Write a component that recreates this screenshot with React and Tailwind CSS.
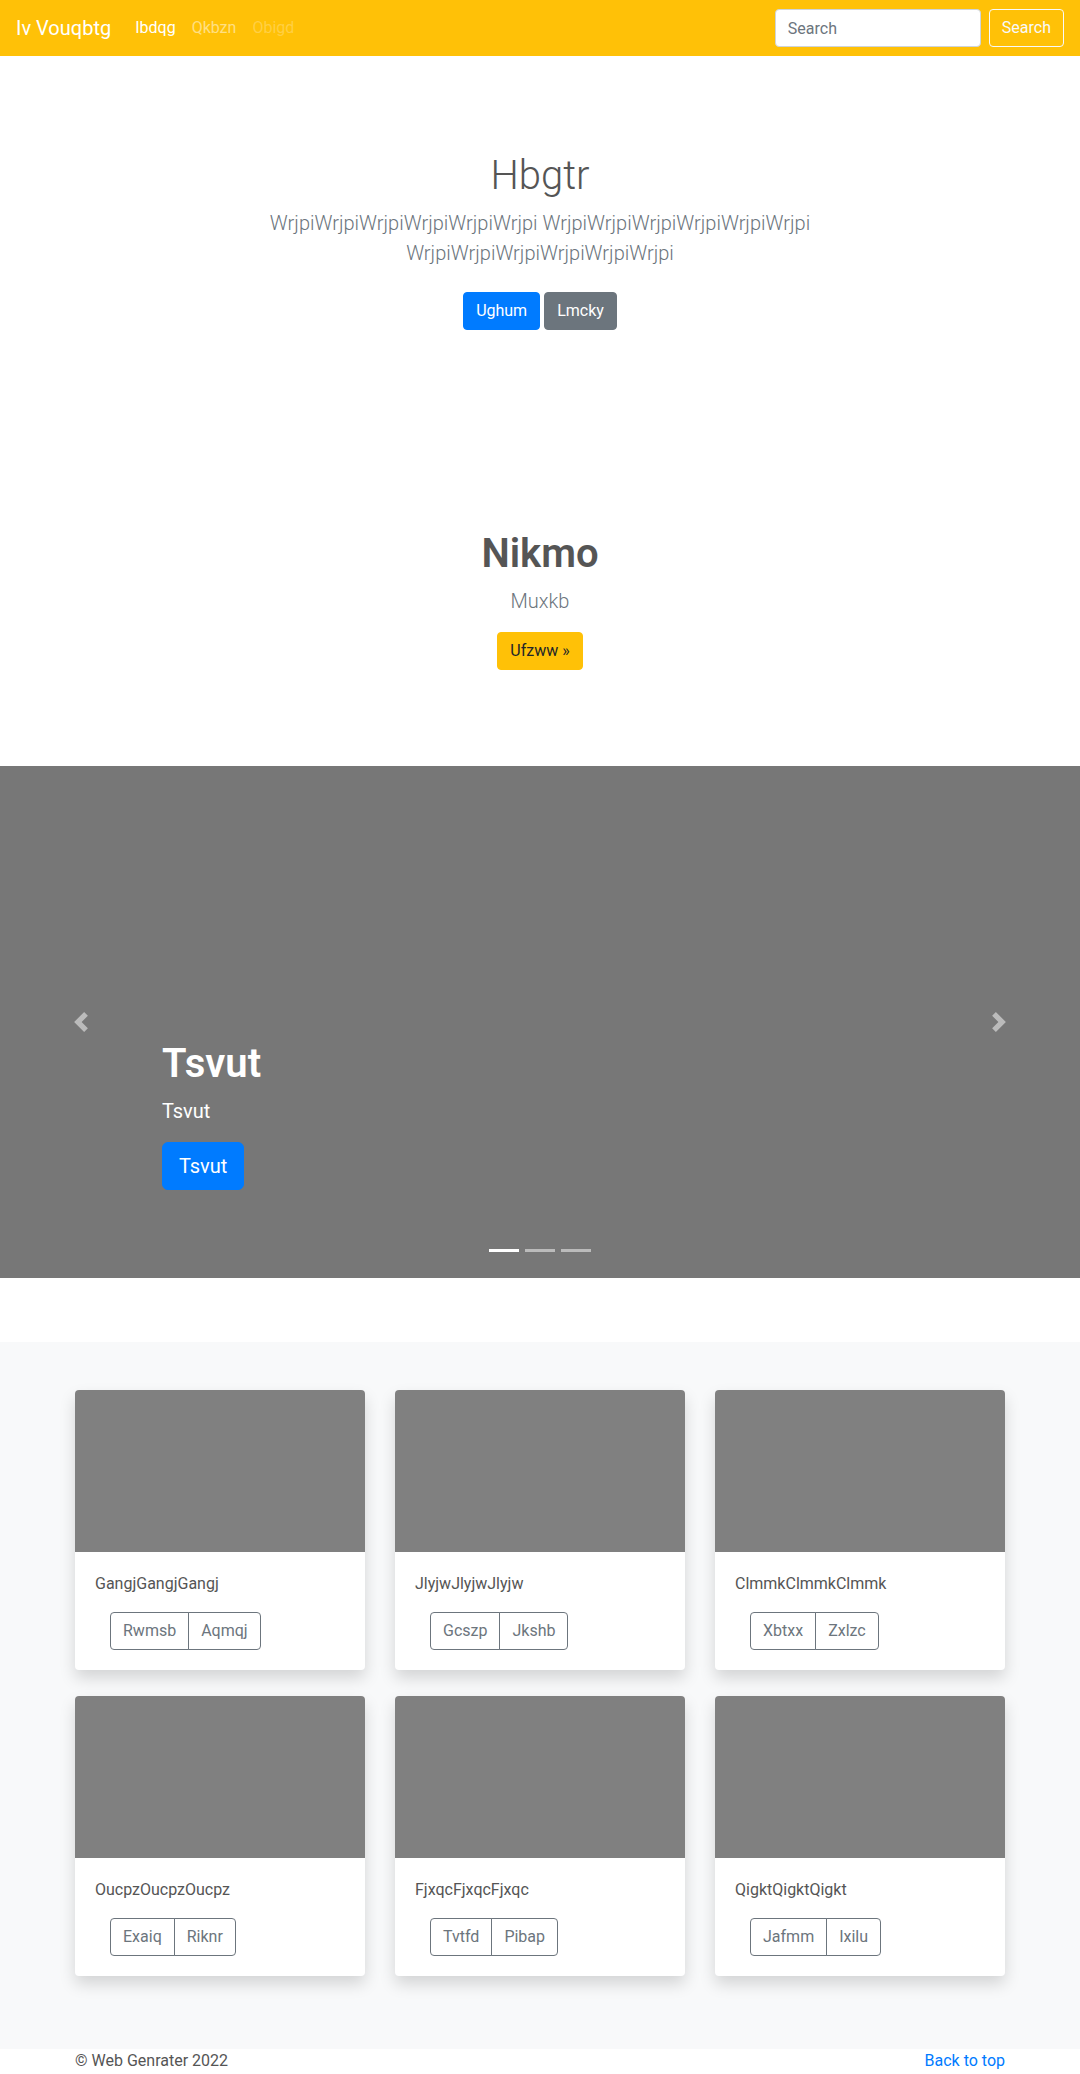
import React from "react";

const cards = [
    {title: "GangjGangjGangj", a: "Rwmsb", b: "Aqmqj"},
    {title: "JlyjwJlyjwJlyjw", a: "Gcszp", b: "Jkshb"},
    {title: "ClmmkClmmkClmmk", a: "Xbtxx", b: "Zxlzc"},
    {title: "OucpzOucpzOucpz", a: "Exaiq", b: "Riknr"},
    {title: "FjxqcFjxqcFjxqc", a: "Tvtfd", b: "Pibap"},
    {title: "QigktQigktQigkt", a: "Jafmm", b: "Ixilu"}
];

function Navbar() {
    return (
        <nav className="h-14 bg-[#ffc107] flex items-center px-4">
            <a className="text-white text-[20px] leading-[30px] mr-4" href="#">Iv Vouqbtg</a>
            <div className="flex text-[16px] leading-6">
                <a className="px-2 text-white" href="#">Ibdqg</a>
                <a className="px-2 text-white/50" href="#">Qkbzn</a>
                <a className="px-2 text-white/25" href="#">Obigd</a>
            </div>
            <form className="ml-auto flex items-center" onSubmit={(e) => e.preventDefault()}>
                <input
                    className="w-[206px] h-[38px] bg-white border border-[#ced4da] rounded px-3 text-[16px] text-[#495057] placeholder:text-[#6c757d] mr-2 outline-none"
                    type="text"
                    placeholder="Search"/>
                <button
                    type="submit"
                    className="h-[38px] px-3 border border-[#f8f9fa] rounded text-[#f8f9fa] text-[16px]">Search
                </button>
            </form>
        </nav>
    );
}

function Chevron({dir}) {
    const d = dir === "prev"
        ? "M5.25 0l-4 4 4 4 1.5-1.5L4.25 4l2.5-2.5L5.25 0z"
        : "M2.75 0l-1.5 1.5L3.75 4l-2.5 2.5L2.75 8l4-4-4-4z";
    return (
        <svg width="20" height="20" viewBox="0 0 8 8" fill="#fff">
            <path d={d}/>
        </svg>
    );
}

function Carousel() {
    return (
        <div className="relative h-[512px] bg-[#777] mb-16">
            <a href="#" className="absolute left-0 top-0 bottom-0 w-[15%] flex items-center justify-center opacity-50">
                <Chevron dir="prev"/>
            </a>
            <a href="#" className="absolute right-0 top-0 bottom-0 w-[15%] flex items-center justify-center opacity-50">
                <Chevron dir="next"/>
            </a>
            <div className="absolute left-[15%] right-[15%] bottom-[52px] pb-5 text-white">
                <h1 className="text-[40px] leading-[1.2] font-semibold mb-2">Tsvut</h1>
                <p className="text-[20px] leading-[1.5] mb-4">Tsvut</p>
                <p className="mb-4">
                    <a href="#" className="inline-block bg-[#007bff] text-white text-[20px] leading-[1.5] px-4 py-2 rounded-md border border-[#007bff]">Tsvut</a>
                </p>
            </div>
            {/* indicators */}
            <div className="absolute left-0 right-0 bottom-[26px] flex justify-center gap-[6px]">
                <span className="w-[30px] h-[3px] bg-white"/>
                <span className="w-[30px] h-[3px] bg-white/50"/>
                <span className="w-[30px] h-[3px] bg-white/50"/>
            </div>
        </div>
    );
}

function Card({title, a, b}) {
    return (
        <div className="bg-white rounded overflow-hidden shadow-[0_8px_16px_rgba(0,0,0,0.15)]">
            <div className="h-[162px] bg-[#808080]"/>
            <div className="p-5">
                <p className="text-[16px] leading-6 text-[#555] mb-4">{title}</p>
                <div className="ml-[15px] inline-flex">
                    <button className="h-[38px] px-3 border border-[#6c757d] rounded-l text-[#6c757d] text-[16px]">{a}</button>
                    <button className="h-[38px] px-3 border border-[#6c757d] -ml-px rounded-r text-[#6c757d] text-[16px]">{b}</button>
                </div>
            </div>
        </div>
    );
}

export default function App() {
    return (
        <div className="bg-white text-[#212529]" style={{fontFamily: "Roboto, 'Noto Sans', sans-serif"}}>
            <Navbar/>

            <section className="py-12 text-center">
                <div className="py-12">
                    <h1 className="text-[40px] leading-[1.2] font-light text-[#555] mb-2">Hbgtr</h1>
                    <p className="text-[20px] leading-[1.5] font-light text-[#6c757d] mb-4 max-w-[600px] mx-auto">
                        WrjpiWrjpiWrjpiWrjpiWrjpiWrjpi WrjpiWrjpiWrjpiWrjpiWrjpiWrjpi WrjpiWrjpiWrjpiWrjpiWrjpiWrjpi
                    </p>
                    <p className="mb-4">
                        <a href="#" className="inline-block my-2 mr-1 bg-[#007bff] border border-[#007bff] text-white text-[16px] leading-6 px-3 py-1.5 rounded">Ughum</a>
                        <a href="#" className="inline-block my-2 bg-[#6c757d] border border-[#6c757d] text-white text-[16px] leading-6 px-3 py-1.5 rounded">Lmcky</a>
                    </p>
                </div>
            </section>

            <section className="py-20 text-center">
                <h1 className="text-[40px] leading-[1.2] font-semibold text-[#555] mb-2">Nikmo</h1>
                <p className="text-[20px] leading-[1.5] font-light text-[#6c757d] mb-4">Muxkb</p>
                <p className="mb-4">
                    <a href="#" className="inline-block bg-[#ffc107] border border-[#ffc107] text-[#212529] text-[16px] leading-6 px-3 py-1.5 rounded">Ufzww »</a>
                </p>
            </section>

            <Carousel/>

            <div className="bg-[#f8f9fa] pt-12 pb-[73px]">
                <div className="w-[960px] mx-auto px-[15px] grid grid-cols-3 gap-x-[30px] gap-y-[26px]">
                    {cards.map((c) => <Card key={c.title} {...c}/>)}
                </div>
            </div>

            <footer className="w-[960px] mx-auto px-[15px] flex justify-between text-[16px] leading-6">
                <p className="text-[#555]">© Web Genrater 2022</p>
                <a href="#" className="text-[#007bff]">Back to top</a>
            </footer>
        </div>
    );
}
